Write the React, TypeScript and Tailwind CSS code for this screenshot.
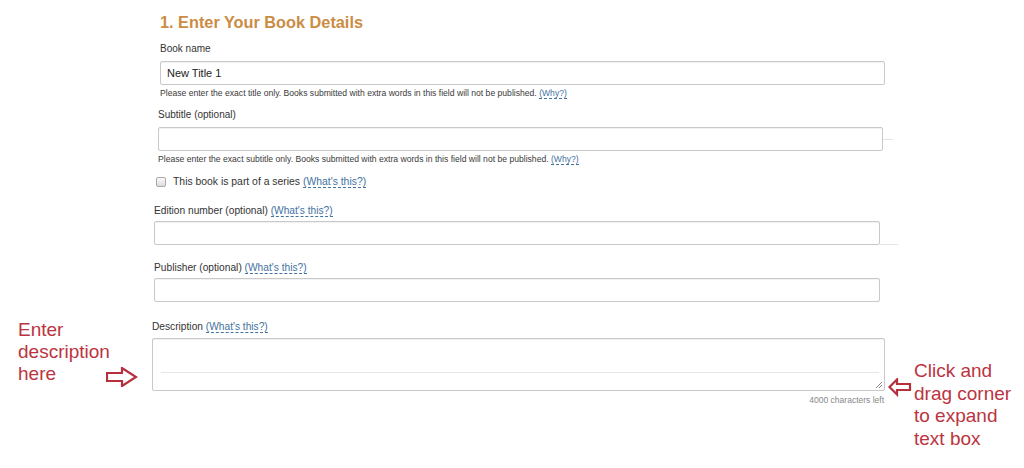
import React from "react";

function WhatsThis({ text = "(What's this?)" }: { text?: string }) {
  return (
    <span className="text-[#43729f] border-b border-dashed border-[#43729f] leading-none">
      {text}
    </span>
  );
}

function TextInput({ value, width }: { value?: string; width: string }) {
  return (
    <div
      className={`${width} h-[24px] border border-[#c9c9c9] rounded-[2px] bg-white shadow-[inset_0_1px_1px_rgba(0,0,0,0.06)] flex items-center px-[6px] text-[11px] text-[#222]`}
    >
      {value}
    </div>
  );
}

function HelpText({ children }: { children: React.ReactNode }) {
  return <p className="mt-[2px] text-[8.6px] leading-[12px] text-[#3a3a3a]">{children}</p>;
}

export default function App() {
  return (
    <div className="relative w-[1024px] h-[468px] bg-white overflow-hidden font-['Liberation_Sans',Arial,sans-serif]">
      {/* Form */}
      <div className="flex flex-col">
        <h2 className="ml-[160px] mt-[12px] text-[16.3px] leading-[20px] font-bold text-[#cb8c44]">
          1. Enter Your Book Details
        </h2>

        {/* Book name */}
        <div className="ml-[160px] mt-[10px]">
          <label className="block text-[10px] leading-[14px] text-[#333]">Book name</label>
          <div className="mt-[5px]">
            <TextInput value="New Title 1" width="w-[725px]" />
          </div>
          <HelpText>
            Please enter the exact title only. Books submitted with extra words in this field will not be published.{" "}
            <WhatsThis text="(Why?)" />
          </HelpText>
        </div>

        {/* Subtitle */}
        <div className="ml-[158px] mt-[9px]">
          <label className="block text-[10px] leading-[14px] text-[#333]">Subtitle (optional)</label>
          <div className="mt-[5px] flex items-center">
            <TextInput width="w-[725px]" />
            <div className="w-[10px] h-px bg-[#e2e2e2]" />
          </div>
          <HelpText>
            Please enter the exact subtitle only. Books submitted with extra words in this field will not be published.{" "}
            <WhatsThis text="(Why?)" />
          </HelpText>
        </div>

        {/* Series */}
        <div className="ml-[156px] mt-[9px] h-[16px] flex items-center gap-[7px] text-[10.4px] text-[#333]">
          <span className="w-[10px] h-[10px] border border-[#a9a9a9] rounded-[2px] bg-gradient-to-b from-[#fafafa] to-[#dcdcdc]" />
          <span>
            This book is part of a series <WhatsThis />
          </span>
        </div>

        {/* Edition number */}
        <div className="ml-[154px] mt-[14px]">
          <label className="block text-[10.2px] leading-[14px] text-[#333]">
            Edition number (optional) <WhatsThis />
          </label>
          <div className="mt-[3px] flex items-end">
            <TextInput width="w-[726px]" />
            <div className="w-[18px] h-px bg-[#e4e4e4]" />
          </div>
        </div>

        {/* Publisher */}
        <div className="ml-[154px] mt-[16px]">
          <label className="block text-[10.2px] leading-[14px] text-[#333]">
            Publisher (optional) <WhatsThis />
          </label>
          <div className="mt-[3px]">
            <TextInput width="w-[726px]" />
          </div>
        </div>

        {/* Description */}
        <div className="ml-[152px] mt-[18px] w-[733px]">
          <label className="block text-[10.2px] leading-[14px] text-[#333]">
            Description <WhatsThis />
          </label>
          <div className="relative mt-[4px] h-[53px] border border-[#c9c9c9] rounded-[2px] bg-white shadow-[inset_0_1px_1px_rgba(0,0,0,0.06)]">
            <div className="absolute left-[8px] right-[5px] top-[33px] h-px bg-[#e6e6e6]" />
            <svg className="absolute right-[1px] bottom-[1px]" width="8" height="8" viewBox="0 0 8 8">
              <path d="M7 1 L1 7 M7 4 L4 7" stroke="#888" strokeWidth="1" />
            </svg>
          </div>
          <p className="mt-[3px] text-right pr-[1px] text-[8.5px] leading-[12px] text-[#888]">4000 characters left</p>
        </div>
      </div>

      {/* Annotations */}
      <div className="absolute left-[18px] top-[319px] text-[19px] leading-[22px] text-[#bb3441]">
        <div>Enter</div>
        <div>description</div>
        <div>here</div>
      </div>
      <svg className="absolute left-[106px] top-[367px]" width="32" height="20" viewBox="0 0 32 20">
        <path d="M1 6 H16 V1 L30 10 L16 19 V14 H1 Z" fill="white" stroke="#b5303c" strokeWidth="2.2" strokeLinejoin="miter" />
      </svg>

      <svg className="absolute left-[888px] top-[378px]" width="24" height="19" viewBox="0 0 24 19">
        <path d="M1.5 9 L9 1.5 V6 H22 V12 H9 V16.5 Z" fill="white" stroke="#b5303c" strokeWidth="2.2" />
      </svg>
      <div className="absolute left-[914px] top-[360px] text-[19px] leading-[22.5px] text-[#bb3441]">
        <div>Click and</div>
        <div>drag corner</div>
        <div>to expand</div>
        <div>text box</div>
      </div>
    </div>
  );
}
